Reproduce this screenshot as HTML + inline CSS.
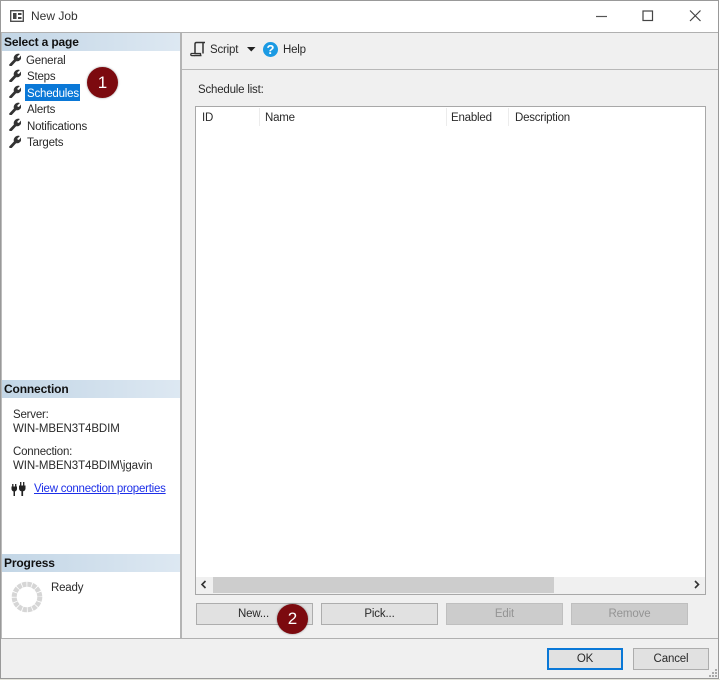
<!DOCTYPE html>
<html><head><meta charset="utf-8">
<style>
html,body{margin:0;padding:0;background:#fff}
body{width:720px;height:680px;position:relative;overflow:hidden;font-family:"Liberation Sans",sans-serif;font-size:11.5px;color:#2a2a2a}
#p{position:absolute;left:0;top:0;width:720px;height:680px;filter:blur(.35px)}
.a{position:absolute;white-space:nowrap}
.t{position:absolute;white-space:nowrap;line-height:14px;letter-spacing:-.2px;margin-top:1px}
.h{position:absolute;left:2px;width:178px;height:18px;background:linear-gradient(90deg,#c3d6e6,#dde8f2);font-weight:bold;font-size:12px;line-height:18px;color:#111;text-indent:2px;letter-spacing:-.15px}
.b{position:absolute;box-sizing:border-box;background:#e1e1e1;border:1px solid #adadad;text-align:center;line-height:21px;height:22px;letter-spacing:-.15px}
.d{background:#ccc;border-color:#bfbfbf;color:#949494}
.w{position:absolute;left:8px}
.c{position:absolute;border-radius:50%;background:#7c0a0f;color:#fff;text-align:center;font-size:17px;box-shadow:0 0 2px rgba(0,0,0,.4)}
.s{position:absolute;top:108px;width:1px;height:18px;background:#ececec}
</style></head><body>
<svg width="0" height="0" style="position:absolute"><defs><symbol id="wr" viewBox="0 0 13 13"><path d="M1.600 11.600 L6.300 6.600 C5.600 4.600 6.400 2.100 9 1.200 C10 .9 11 1 11.300 1.200 L8.900 3.400 L9.400 5 L11 5.400 L13 3 C13.300 5 12.400 7 10.600 7.700 C9.800 8 8.900 8 8.100 7.800 L3.400 12.800 C2.700 13.300 1.100 12.600 1.600 11.600Z" fill="#333" stroke="#333" stroke-width=".7"/></symbol></defs></svg>
<div id="p">
<!-- window frame -->
<div class="a" style="left:0;top:0;width:717px;height:677px;border:1px solid #999;background:#f0f0f0"></div>
<div class="a" style="left:1px;top:1px;width:717px;height:31px;background:#fff"></div>
<div class="a" style="left:1px;top:32px;width:717px;height:1px;background:#b0b0b0"></div>
<div class="a" style="left:0;top:679px;width:720px;height:1px;background:#e4e4dc"></div>

<!-- title -->
<svg class="a" style="left:10px;top:10px" width="14" height="12" viewBox="0 0 14 12"><rect x=".7" y=".7" width="12.600" height="10.600" fill="none" stroke="#444" stroke-width="1.300"/><rect x="3" y="3" width="3.500" height="6" fill="#444"/><rect x="8" y="3" width="3.500" height="2" fill="#444"/><rect x="8" y="7" width="3.500" height="2" fill="#444"/></svg>
<div class="t" style="left:31px;top:8px;font-size:12px;letter-spacing:0;color:#333">New Job</div>
<svg class="a" style="left:590px;top:8px" width="120" height="16" viewBox="0 0 120 16"><path d="M6 8.500H17" stroke="#555" stroke-width="1.200"/><rect x="53" y="3" width="9.500" height="9.500" fill="none" stroke="#444" stroke-width="1.200"/><path d="M100 2.500L110.500 13M110.500 2.500L100 13" stroke="#444" stroke-width="1.200"/></svg>

<!-- left panel -->
<div class="a" style="left:1px;top:33px;width:1px;height:605px;background:#bcbcbc"></div>
<div class="a" style="left:2px;top:33px;width:178px;height:605px;background:#fff"></div>
<div class="a" style="left:180px;top:33px;width:2px;height:605px;background:#b4b4b4"></div>
<div class="h" style="top:33px">Select a page</div>
<svg class="a w" style="top:53px" width="13" height="13"><use href="#wr"/></svg>
<svg class="a w" style="top:69px" width="13" height="13"><use href="#wr"/></svg>
<svg class="a w" style="top:85px" width="13" height="13"><use href="#wr"/></svg>
<svg class="a w" style="top:102px" width="13" height="13"><use href="#wr"/></svg>
<svg class="a w" style="top:118px" width="13" height="13"><use href="#wr"/></svg>
<svg class="a w" style="top:135px" width="13" height="13"><use href="#wr"/></svg>
<div class="t" style="left:26px;top:53px">General</div>
<div class="t" style="left:27px;top:69px">Steps</div>
<div class="a" style="left:25px;top:84px;width:55px;height:17px;background:#0a78d7"></div>
<div class="t" style="left:27px;top:86px;color:#fff">Schedules</div>
<div class="t" style="left:27px;top:102px">Alerts</div>
<div class="t" style="left:27px;top:119px">Notifications</div>
<div class="t" style="left:27px;top:135px">Targets</div>

<div class="h" style="top:380px">Connection</div>
<div class="t" style="left:13px;top:407px">Server:</div>
<div class="t" style="left:13px;top:421px;letter-spacing:-.08px">WIN-MBEN3T4BDIM</div>
<div class="t" style="left:13px;top:444px">Connection:</div>
<div class="t" style="left:13px;top:458px;letter-spacing:-.08px">WIN-MBEN3T4BDIM\jgavin</div>
<svg class="a" style="left:11px;top:481px" width="15" height="15" viewBox="0 0 15 15"><path d="M.5 5.500h5.500v2.500a2.700 2.700 0 0 1-2 2.400V15h-1.500v-4.600a2.700 2.700 0 0 1-2-2.400Z M8 4.500h6.500v3a3 3 0 0 1-2.400 2.800V15h-1.700v-4.700A3 3 0 0 1 8 7.500Z" fill="#222"/><path d="M9.700 1v3.500M12.700 1v3.500M1.800 3v2.500M4.700 3v2.500" stroke="#222" stroke-width="1.300"/></svg>
<div class="t" style="left:34px;top:481px;color:#1d2fe8;text-decoration:underline;letter-spacing:-.24px">View connection properties</div>

<div class="h" style="top:554px">Progress</div>
<svg class="a" style="left:11px;top:581px" width="32" height="32" viewBox="0 0 32 32"><circle cx="16" cy="16" r="12.800" fill="none" stroke="#d6d6d6" stroke-width="5" stroke-dasharray="4.200 .82"/></svg>
<div class="t" style="left:51px;top:580px">Ready</div>

<!-- toolbar -->
<div class="a" style="left:182px;top:69px;width:536px;height:1px;background:#b8b8b8"></div>
<svg class="a" style="left:190px;top:41px" width="16" height="16" viewBox="0 0 16 16"><path d="M5 12V3C5 2 5.500 1.500 6.500 1.500H15M13 1.500V12.500M4.500 14.500H11.500" fill="none" stroke="#333" stroke-width="1.500"/><path d="M.8 12.500H10.500V14.500M.8 12.500V13.500C.8 14.200 1.300 14.600 2 14.600H5" fill="none" stroke="#333" stroke-width="1.300"/></svg>
<div class="t" style="left:210px;top:42px">Script</div>
<svg class="a" style="left:247px;top:47px" width="9" height="5"><path d="M0 0H8.500L4.250 4.500Z" fill="#222"/></svg>
<div class="a" style="left:263px;top:42px;width:15px;height:15px;border-radius:50%;background:#1b9ae3;color:#fff;font-weight:bold;font-size:13px;line-height:15px;text-align:center">?</div>
<div class="t" style="left:283px;top:42px">Help</div>

<!-- list -->
<div class="t" style="left:198px;top:82px">Schedule list:</div>
<div class="a" style="left:195px;top:106px;width:509px;height:487px;background:#fff;border:1px solid #a8a8a8"></div>
<div class="s" style="left:259px"></div><div class="s" style="left:446px"></div><div class="s" style="left:508px"></div>
<div class="t" style="left:202px;top:110px">ID</div>
<div class="t" style="left:265px;top:110px">Name</div>
<div class="t" style="left:451px;top:110px">Enabled</div>
<div class="t" style="left:515px;top:110px;letter-spacing:-.24px">Description</div>
<div class="a" style="left:196px;top:577px;width:509px;height:17px;background:#f0f0f0"></div>
<div class="a" style="left:213px;top:577px;width:341px;height:16px;background:#cdcdcd"></div>
<svg class="a" style="left:200px;top:580px" width="8" height="9"><path d="M5.500 1L2 4.500L5.500 8" fill="none" stroke="#333" stroke-width="1.600"/></svg>
<svg class="a" style="left:693px;top:580px" width="8" height="9"><path d="M2 1L5.500 4.500L2 8" fill="none" stroke="#333" stroke-width="1.600"/></svg>

<!-- buttons -->
<div class="b" style="left:196px;top:603px;width:117px;padding-right:2px">New...</div>
<div class="b" style="left:321px;top:603px;width:117px">Pick...</div>
<div class="b d" style="left:446px;top:603px;width:117px">Edit</div>
<div class="b d" style="left:571px;top:603px;width:117px">Remove</div>

<!-- footer -->
<div class="a" style="left:1px;top:638px;width:717px;height:1px;background:#b0b0b0"></div>
<div class="b" style="left:547px;top:648px;width:76px;border:2px solid #0a78d7;line-height:19px">OK</div>
<div class="b" style="left:633px;top:648px;width:76px">Cancel</div>
<svg class="a" style="left:708px;top:668px" width="10" height="10"><g fill="#aaa"><rect x="7" y="1" width="2" height="2"/><rect x="4" y="4" width="2" height="2"/><rect x="7" y="4" width="2" height="2"/><rect x="1" y="7" width="2" height="2"/><rect x="4" y="7" width="2" height="2"/><rect x="7" y="7" width="2" height="2"/></g></svg>

<!-- badges -->
<div class="c" style="left:87px;top:67px;width:31px;height:31px;line-height:31px">1</div>
<div class="c" style="left:277px;top:604px;width:31px;height:30px;line-height:30px">2</div>
</div>
</body></html>
